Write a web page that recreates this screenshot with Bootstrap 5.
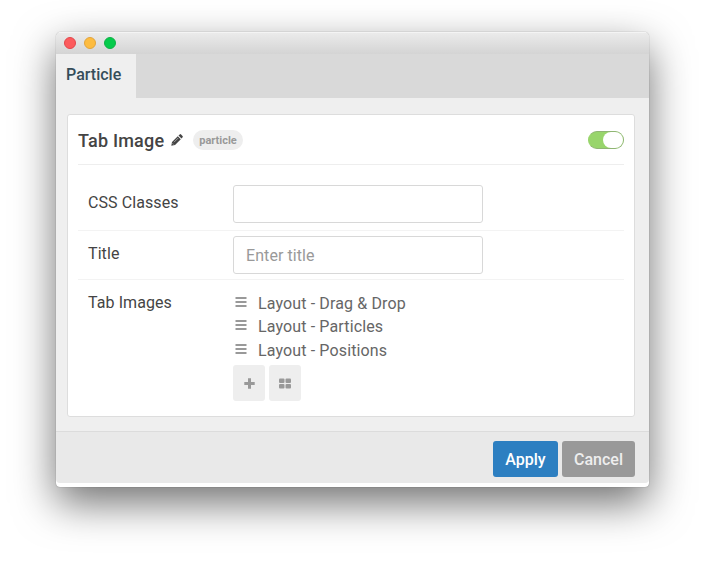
<!DOCTYPE html>
<html lang="en">
<head>
<meta charset="utf-8">
<meta name="viewport" content="width=device-width, initial-scale=1">
<title>Particle settings</title>
<link href="https://cdn.jsdelivr.net/npm/bootstrap@5.3.0/dist/css/bootstrap.min.css" rel="stylesheet">
<style>
body{font-family:Roboto,"Liberation Sans",sans-serif;font-size:16px;line-height:24px;color:#444;background:#fff;height:567px;overflow:hidden}
.win{width:593px;height:455px;margin:32px 0 0 56px;border-radius:5px 5px 4px 4px;background:#fff;box-shadow:0 0 1px rgba(0,0,0,.5),0 16px 42px rgba(0,0,0,.56)}
.win-inner{border-radius:inherit}
.titlebar{height:22px;padding-left:8px;gap:8px;background:linear-gradient(#ececec,#d4d4d4);box-shadow:inset 0 1px #f4f4f4}
.dot{width:12px;height:12px;border-radius:50%;border:1px solid #e2474b;background:#fc5b5d}
.dot-y{border-color:#e2a43c;background:#fdbc40}
.dot-g{border-color:#10b046;background:#05cb4b}
.tabs{height:44px;background:#d9d9d9}
.tab-on{width:80px;padding:9px 0 0 10px;background:#efefef;color:#354d59;font-weight:500}
.stage{height:333px;padding:16px 14px 0 11px;background:#efefef}
.panel{height:303px;padding:0 10px;border:1px solid #ddd;border-radius:3px;background:#fff}
.panel-top{height:50px;border-bottom:1px solid #eee}
.heading{font-size:18px;font-weight:500;line-height:24px;letter-spacing:.2px;margin:2px 0 0}
.pencil{margin-left:7px}
.tag{height:20px;padding:1px 6px 0;margin-left:10px;border-radius:10px;background:#eee;color:#999;font-size:11px;font-weight:700;line-height:20px}
.toggle{width:36px;height:18px;border-radius:9px;background:#98d56b;border:1px solid #8fb573;border-left-color:#98d56b}
.knob{width:20px;height:16px;border-radius:8px;background:#fff}
.rowline{border-bottom:1px solid #f3f3f3;padding-left:10px}
.name{width:145px;flex:none;padding-top:6px;letter-spacing:.08px}
.name-top{padding-top:0}
.field.form-control{width:250px;height:38px;padding:0 12px;border:1px solid #d8d8d8;border-radius:3px;font-size:16px;letter-spacing:.08px;color:#444}
.field.form-control::placeholder{color:#999}
.items{color:#666;line-height:23.5px;letter-spacing:.13px}
.items svg{margin:0 11px 3px 2px}
.sq.btn{width:32px;height:36px;padding:2px 0 0;border:0;border-radius:3px;background:#eee}
.foot{height:52px;padding:9px 14px 0 0;gap:4px;background:#e9e9e9;border-top:1px solid #dcdcdc}
.act.btn{height:36px;padding:1px 0 0;border:0;border-radius:3px;font-size:16px;font-weight:500;line-height:35px;color:#fff}
.go.btn{width:65px;background:#2d7fc1}
.no.btn{width:73px;background:#999;color:#eee}
</style>
</head>
<body>
<div class="win">
 <div class="win-inner overflow-hidden">
  <div class="titlebar d-flex align-items-center"><span class="dot"></span><span class="dot dot-y"></span><span class="dot dot-g"></span></div>
  <div class="tabs d-flex"><div class="tab-on"><span>Particle</span></div></div>
  <main class="stage">
   <section class="panel">
    <header class="panel-top d-flex align-items-center">
     <h1 class="heading">Tab Image</h1>
     <svg class="pencil" width="12" height="12" viewBox="0 0 12 12" fill="#444"><path d="M.3 11.7 1 8 6.8 2.2 9.8 5.2 4 11ZM7.5 1.5 8.7.4Q9.4-.2 10.1.5L11.5 1.9Q12.2 2.6 11.6 3.3L10.5 4.5Z"/><path d="M3 8.2 7.2 4M1.5 9.3 2.7 10.5" stroke="#fff" stroke-width=".5"/></svg>
     <span class="tag">particle</span>
     <span class="toggle d-flex justify-content-end ms-auto"><span class="knob"></span></span>
    </header>
    <div class="rowline d-flex" style="height:66px;padding-top:20px"><label class="name" for="css">CSS Classes</label><input id="css" class="field form-control"></div>
    <div class="rowline d-flex" style="height:49px;padding-top:5px"><label class="name" for="ttl">Title</label><input id="ttl" class="field form-control" placeholder="Enter title"></div>
    <div class="rowline d-flex border-0" style="padding-top:11px">
     <div class="name name-top">Tab Images</div>
     <div>
      <div class="items" style="padding-top:.6px">
       <div class="d-flex align-items-center"><svg width="12" height="10" viewBox="0 0 12 10" stroke="#999" stroke-width="2"><path d="M.5 1h11M.5 5h11M.5 9h11"/></svg><span>Layout - Drag &amp; Drop</span></div>
       <div class="d-flex align-items-center"><svg width="12" height="10" viewBox="0 0 12 10" stroke="#999" stroke-width="2"><path d="M.5 1h11M.5 5h11M.5 9h11"/></svg><span>Layout - Particles</span></div>
       <div class="d-flex align-items-center"><svg width="12" height="10" viewBox="0 0 12 10" stroke="#999" stroke-width="2"><path d="M.5 1h11M.5 5h11M.5 9h11"/></svg><span>Layout - Positions</span></div>
      </div>
      <div class="d-flex gap-1" style="margin-top:2.9px">
       <button class="sq btn d-flex align-items-center justify-content-center" aria-label="Add"><svg width="11" height="11" viewBox="0 0 11 11" stroke="#999" stroke-width="3"><path d="M5.5.3v10.4M.3 5.5h10.4"/></svg></button>
       <button class="sq btn d-flex align-items-center justify-content-center" aria-label="Grid"><svg width="12" height="11" viewBox="0 0 12 11" fill="#999"><rect y=".5" width="5.5" height="4.5" rx="1"/><rect x="6.5" y=".5" width="5.5" height="4.5" rx="1"/><rect y="6" width="5.5" height="4.5" rx="1"/><rect x="6.5" y="6" width="5.5" height="4.5" rx="1"/></svg></button>
      </div>
     </div>
    </div>
   </section>
  </main>
  <footer class="foot d-flex justify-content-end"><button class="act go btn">Apply</button><button class="act no btn">Cancel</button></footer>
 </div>
</div>
<script src="https://cdn.jsdelivr.net/npm/bootstrap@5.3.0/dist/js/bootstrap.bundle.min.js"></script>
</body>
</html>
